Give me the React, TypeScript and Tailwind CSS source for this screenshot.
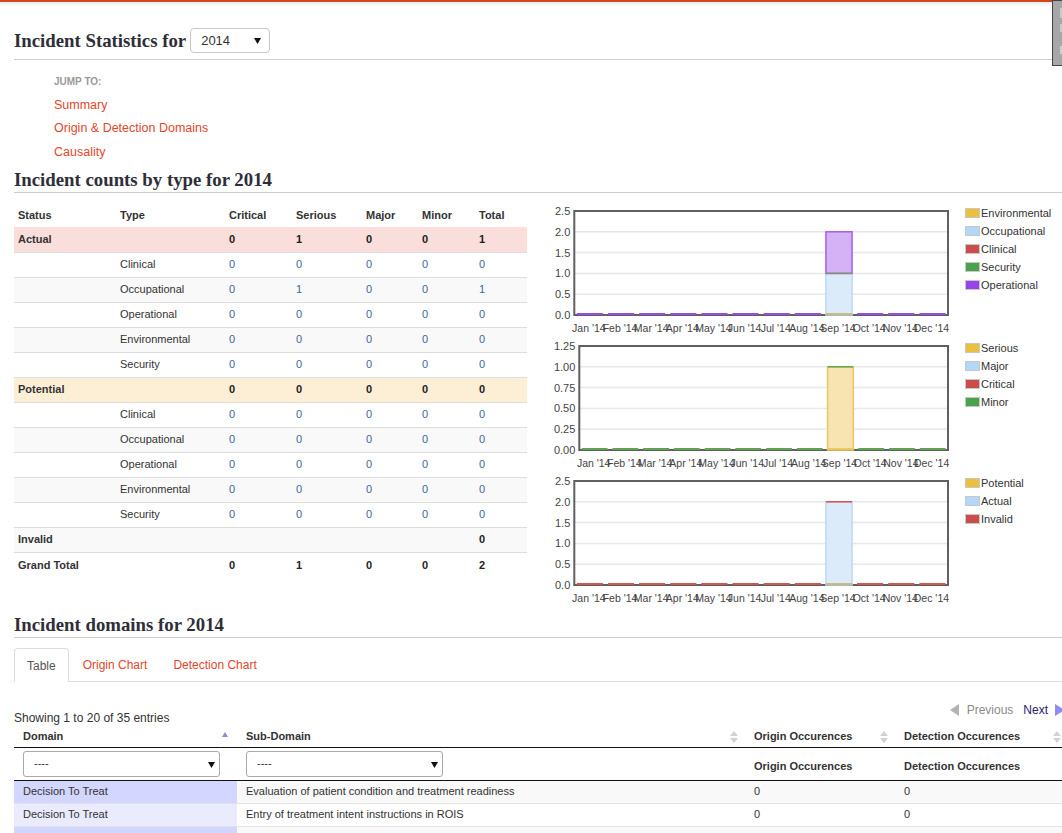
import React from "react";

const months = ["Jan '14", "Feb '14", "Mar '14", "Apr '14", "May '14", "Jun '14", "Jul '14", "Aug '14", "Sep '14", "Oct '14", "Nov '14", "Dec '14"];

type Seg = { from: number; to: number; fill: string; stroke: string };
type Mark = { at: number; color: string };

type ChartProps = {
    ticks: string[];
    max: number;
    left: number;
    base: string;
    segs: Seg[];
    marks: Mark[];
    sepBase: string;
};

// stacked month chart, only Sep has data
const Chart: React.FC<ChartProps> = ({ ticks, max, left, base, segs, marks, sepBase }) => {
    const top = 9;
    const bottom = 113;
    const right = 403;
    const y = (v: number) => bottom - (v / max) * (bottom - top);
    const w = (right - left) / 12;
    return (
        <svg width="420" height="135" className="block shrink-0" fontFamily="'Liberation Sans', Arial, sans-serif">
            {ticks.map((t) => {
                const v = parseFloat(t);
                return (
                    <g key={t}>
                        {v > 0 && v < max && (
                            <line x1={left} x2={right} y1={y(v)} y2={y(v)} stroke="#e8e8e8" strokeWidth="1.5" />
                        )}
                        <text x={left - 4} y={y(v) + 4} textAnchor="end" fontSize="11" fill="#444">
                            {t}
                        </text>
                    </g>
                );
            })}
            <rect x={left} y={top} width={right - left} height={bottom - top} fill="none" stroke="#606060" strokeWidth="2" />
            {months.map((m, i) => {
                const x0 = left + i * w + 2.5;
                const bw = w - 5;
                if (i !== 8) {
                    return <line key={m} x1={x0} x2={x0 + bw} y1={bottom - 1} y2={bottom - 1} stroke={base} strokeWidth="2" />;
                }
                return (
                    <g key={m}>
                        {segs.map((s) => (
                            <rect
                                key={s.from}
                                x={x0}
                                y={y(s.to)}
                                width={bw}
                                height={y(s.from) - y(s.to)}
                                fill={s.fill}
                                stroke={s.stroke}
                                strokeWidth="1.5"
                            />
                        ))}
                        {marks.map((k) => (
                            <line key={k.at} x1={x0} x2={x0 + bw} y1={y(k.at)} y2={y(k.at)} stroke={k.color} strokeWidth="1.5" />
                        ))}
                        <line x1={x0} x2={x0 + bw} y1={bottom - 1} y2={bottom - 1} stroke={sepBase} strokeWidth="1.5" />
                    </g>
                );
            })}
            {months.map((m, i) => (
                <text key={m} x={left + i * w + w / 2 - 1} y="130" textAnchor="middle" fontSize="10.5" fill="#444">
                    {m}
                </text>
            ))}
        </svg>
    );
};

const Legend: React.FC<{ items: [string, string][] }> = ({ items }) => (
    <div className="pt-[2px]">
        {items.map(([name, cls]) => (
            <div key={name} className="flex items-center h-[18px] text-[11px] text-[#333]">
                <span className={`w-[15px] h-[10px] border border-[#c8c8c8] mr-[1px] ${cls}`} />
                {name}
            </div>
        ))}
    </div>
);

type Row = { status?: string; type?: string; vals: string[]; bold?: boolean; bg: string };

const rows: Row[] = [
    { status: "Actual", vals: ["0", "1", "0", "0", "1"], bold: true, bg: "bg-[#f9dedb]" },
    { type: "Clinical", vals: ["0", "0", "0", "0", "0"], bg: "bg-white" },
    { type: "Occupational", vals: ["0", "1", "0", "0", "1"], bg: "bg-[#f9f9f9]" },
    { type: "Operational", vals: ["0", "0", "0", "0", "0"], bg: "bg-white" },
    { type: "Environmental", vals: ["0", "0", "0", "0", "0"], bg: "bg-[#f9f9f9]" },
    { type: "Security", vals: ["0", "0", "0", "0", "0"], bg: "bg-white" },
    { status: "Potential", vals: ["0", "0", "0", "0", "0"], bold: true, bg: "bg-[#fcefd6]" },
    { type: "Clinical", vals: ["0", "0", "0", "0", "0"], bg: "bg-white" },
    { type: "Occupational", vals: ["0", "0", "0", "0", "0"], bg: "bg-[#f9f9f9]" },
    { type: "Operational", vals: ["0", "0", "0", "0", "0"], bg: "bg-white" },
    { type: "Environmental", vals: ["0", "0", "0", "0", "0"], bg: "bg-[#f9f9f9]" },
    { type: "Security", vals: ["0", "0", "0", "0", "0"], bg: "bg-white" },
    { status: "Invalid", vals: ["", "", "", "", "0"], bold: true, bg: "bg-[#f9f9f9]" },
    { status: "Grand Total", vals: ["0", "1", "0", "0", "2"], bold: true, bg: "bg-white" },
];

const colW = ["w-[102px]", "w-[109px]", "w-[67px]", "w-[70px]", "w-[56px]", "w-[57px]", "w-[52px]"];

const SortBoth = () => (
    <svg width="8" height="12" className="absolute right-[7px] top-[5px]">
        <path d="M4 0L8 5H0Z M0 7H8L4 12Z" fill="#d2d2d2" />
    </svg>
);

const Arrow = () => (
    <svg width="7" height="6" className="absolute right-[4px] top-[10px]">
        <path d="M0 0H7L3.5 6Z" fill="#111" />
    </svg>
);

// third row sits below the fold, only its colours show
const domainRows = [
    ["Decision To Treat", "Evaluation of patient condition and treatment readiness", "0", "0"],
    ["Decision To Treat", "Entry of treatment intent instructions in ROIS", "0", "0"],
    ["", "", "", ""],
];

export default function App() {
    return (
        <div className="relative w-[1062px] h-[833px] overflow-hidden bg-white text-[#333] font-['Liberation_Sans',Arial,sans-serif]">
            <div className="h-[2px] bg-[#d3451d]" />
            <div className="h-[5px] bg-linear-to-b from-[#ececec] to-white" />

            {/* clipped widget at the top right */}
            <div className="absolute left-[1052px] top-0 w-[16px] h-[66px] border border-[#444] bg-[#a7a7a7]">
                <div className="absolute left-[7px] top-[7px] w-[4px] h-[10px] bg-[#c9c9c9]" />
                <div className="absolute left-[7px] top-[23px] w-[4px] h-[8px] bg-[#c9c9c9]" />
                <div className="absolute left-[7px] top-[45px] w-[4px] h-[8px] bg-[#d0d0d0]" />
            </div>

            <div className="w-[1066px] pl-[14px]">
                <div className="mt-[21px] pb-[6px] border-b border-[#cccccc]">
                    <div className="flex items-center h-[25px]">
                        <h1 className="font-['Liberation_Serif',serif] font-bold text-[18.8px] leading-[25px] text-[#2e2e38]">
                            Incident Statistics for
                        </h1>
                        <div className="relative ml-[4px] w-[80px] h-[25px] border border-[#c8c8c8] rounded-[4px] flex items-center pl-[10px] text-[13px] text-[#333]">
                            2014
                            <svg width="7" height="6" className="absolute right-[8px] top-[9px]">
                                <path d="M0 0H7L3.5 6Z" fill="#111" />
                            </svg>
                        </div>
                    </div>
                </div>

                <div className="pl-[40px] pt-[15px]">
                    <div className="h-[14px] leading-[14px] text-[10px] font-bold text-[#9a9a9a]">JUMP TO:</div>
                    <ul className="mt-[4.5px] text-[12.5px] leading-[23.5px] text-[#e2472b]">
                        <li>Summary</li>
                        <li>Origin &amp; Detection Domains</li>
                        <li>Causality</li>
                    </ul>
                </div>

                <h2 className="mt-[4px] border-b border-[#cccccc] font-['Liberation_Serif',serif] font-bold text-[18.8px] leading-[24px] text-[#2e2e38]">
                    Incident counts by type for 2014
                </h2>

                <div className="mt-[9px] flex items-start">
                    <table className="w-[513px] table-fixed border-collapse text-[11px]">
                        <colgroup>
                            {colW.map((c, i) => (
                                <col key={i} className={c} />
                            ))}
                        </colgroup>
                        <thead>
                            <tr className="h-[25px] font-bold text-left text-[#333]">
                                {["Status", "Type", "Critical", "Serious", "Major", "Minor", "Total"].map((h) => (
                                    <th key={h} className="pl-[4px] pt-[1px] font-bold">
                                        {h}
                                    </th>
                                ))}
                            </tr>
                        </thead>
                        <tbody>
                            {rows.map((r, i) => (
                                <tr key={i} className={`h-[25px] ${r.bg} ${i > 0 ? "border-t border-[#dddddd]" : ""}`}>
                                    <td className="pl-[4px] font-bold text-[#333]">{r.status}</td>
                                    <td className="pl-[4px] text-[#333]">{r.type}</td>
                                    {r.vals.map((v, j) => (
                                        <td key={j} className={`pl-[4px] ${r.bold ? "font-bold text-[#222]" : "text-[#3d679b]"}`}>
                                            {v}
                                        </td>
                                    ))}
                                </tr>
                            ))}
                        </tbody>
                    </table>

                    <div className="ml-[18px] flex flex-col">
                        <div className="flex">
                            <Chart
                                ticks={["2.5", "2.0", "1.5", "1.0", "0.5", "0.0"]}
                                max={2.5}
                                left={29.3}
                                base="#9a4ae6"
                                segs={[
                                    { from: 0, to: 1, fill: "#dcebfa", stroke: "#b9d9f5" },
                                    { from: 1, to: 2, fill: "#d4b2f5", stroke: "#a65fea" },
                                ]}
                                marks={[{ at: 1, color: "#7d9474" }]}
                                sepBase="#c9b04c"
                            />
                            <Legend
                                items={[
                                    ["Environmental", "bg-[#ecbf3e]"],
                                    ["Occupational", "bg-[#b3d7f7]"],
                                    ["Clinical", "bg-[#cc4b4b]"],
                                    ["Security", "bg-[#4aa24a]"],
                                    ["Operational", "bg-[#9944e8]"],
                                ]}
                            />
                        </div>
                        <div className="flex">
                            <Chart
                                ticks={["1.25", "1.00", "0.75", "0.50", "0.25", "0.00"]}
                                max={1.25}
                                left={34.3}
                                base="#5ea552"
                                segs={[{ from: 0, to: 1, fill: "#f7e4b0", stroke: "#eec65c" }]}
                                marks={[{ at: 1, color: "#5ea552" }]}
                                sepBase="#e9c252"
                            />
                            <Legend
                                items={[
                                    ["Serious", "bg-[#ecbf3e]"],
                                    ["Major", "bg-[#b3d7f7]"],
                                    ["Critical", "bg-[#cc4b4b]"],
                                    ["Minor", "bg-[#4aa24a]"],
                                ]}
                            />
                        </div>
                        <div className="flex">
                            <Chart
                                ticks={["2.5", "2.0", "1.5", "1.0", "0.5", "0.0"]}
                                max={2.5}
                                left={29.3}
                                base="#d4554f"
                                segs={[{ from: 0, to: 2, fill: "#dcebfa", stroke: "#b9d9f5" }]}
                                marks={[{ at: 2, color: "#d4554f" }]}
                                sepBase="#c9b04c"
                            />
                            <Legend
                                items={[
                                    ["Potential", "bg-[#ecbf3e]"],
                                    ["Actual", "bg-[#b3d7f7]"],
                                    ["Invalid", "bg-[#cc4b4b]"],
                                ]}
                            />
                        </div>
                    </div>
                </div>

                <h2 className="mt-[6px] border-b border-[#cccccc] font-['Liberation_Serif',serif] font-bold text-[18.8px] leading-[24px] text-[#2e2e38]">
                    Incident domains for 2014
                </h2>

                <div className="mt-[10px] flex border-b border-[#dddddd] text-[12px]">
                    <div className="-mb-px h-[34px] px-[12px] flex items-center border border-b-0 border-[#dddddd] rounded-t-[4px] bg-white text-[#555]">
                        Table
                    </div>
                    <div className="h-[33px] pl-[14px] pr-[12px] flex items-center text-[#e2472b]">Origin Chart</div>
                    <div className="h-[33px] pl-[14px] flex items-center text-[#e2472b]">Detection Chart</div>
                </div>

                <div className="h-[44px] flex justify-between items-end">
                    <div className="text-[12px] leading-[16px] text-[#333]">Showing 1 to 20 of 35 entries</div>
                    <div className="mb-[7px] h-[18px] flex items-center text-[12px]">
                        <svg width="9" height="12">
                            <path d="M9 0V12L0 6Z" fill="#b3b3b3" />
                        </svg>
                        <span className="ml-[8px] text-[#8a8a8a]">Previous</span>
                        <span className="ml-[10px] text-[#2a1b6b]">Next</span>
                        <svg width="11" height="12" className="ml-[7px]">
                            <path d="M0 0V12L10 6Z" fill="#8e8ef0" />
                        </svg>
                    </div>
                </div>

                <table className="w-[1054px] table-fixed border-collapse text-[11px]">
                    <colgroup>
                        <col className="w-[223px]" />
                        <col className="w-[508px]" />
                        <col className="w-[150px]" />
                        <col className="w-[173px]" />
                    </colgroup>
                    <thead>
                        <tr className="h-[21px] border-b border-[#111] text-left">
                            <th className="relative pl-[9px] font-bold">
                                Domain
                                <svg width="6" height="5" className="absolute right-[9px] top-[6px]">
                                    <path d="M3 0L6 5H0Z" fill="#8b8be3" />
                                </svg>
                            </th>
                            <th className="relative pl-[9px] font-bold">
                                Sub-Domain
                                <SortBoth />
                            </th>
                            <th className="relative pl-[9px] font-bold">
                                Origin Occurences
                                <SortBoth />
                            </th>
                            <th className="relative pl-[9px] font-bold">
                                Detection Occurences
                                <SortBoth />
                            </th>
                        </tr>
                        <tr className="h-[33px] border-b border-[#111] text-left">
                            <td className="pl-[9px]">
                                <div className="relative w-[197px] h-[26px] border border-[#a9a9a9] rounded-[3px] flex items-center pl-[10px]">
                                    ----
                                    <Arrow />
                                </div>
                            </td>
                            <td className="pl-[9px]">
                                <div className="relative w-[197px] h-[26px] border border-[#a9a9a9] rounded-[3px] flex items-center pl-[10px]">
                                    ----
                                    <Arrow />
                                </div>
                            </td>
                            <th className="pl-[9px] pt-[5px] font-bold">Origin Occurences</th>
                            <th className="pl-[9px] pt-[5px] font-bold">Detection Occurences</th>
                        </tr>
                    </thead>
                    <tbody>
                        {domainRows.map((r, i) => (
                            <tr key={i} className={`h-[23px] border-b border-[#e2e2e2] ${i % 2 === 0 ? "bg-[#f9f9f9]" : "bg-white"}`}>
                                <td className={`pl-[9px] ${i % 2 === 0 ? "bg-[#d3d6ff]" : "bg-[#eaebff]"}`}>{r[0]}</td>
                                <td className="pl-[9px]">{r[1]}</td>
                                <td className="pl-[9px]">{r[2]}</td>
                                <td className="pl-[9px]">{r[3]}</td>
                            </tr>
                        ))}
                    </tbody>
                </table>
            </div>
        </div>
    );
}
